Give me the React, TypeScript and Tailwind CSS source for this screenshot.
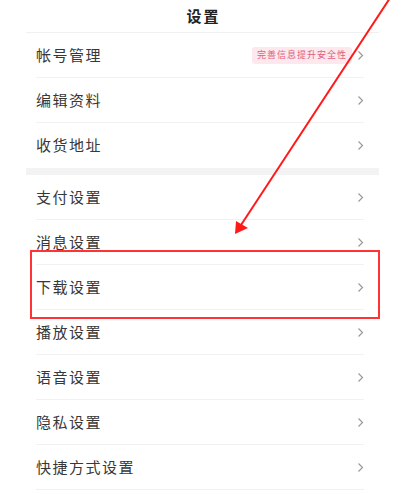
import React from 'react';

const group1 = ['帐号管理', '编辑资料', '收货地址'];
const group2 = ['支付设置', '消息设置', '下载设置', '播放设置', '语音设置', '隐私设置', '快捷方式设置'];

function Chevron() {
  return (
    <svg width="7" height="11" viewBox="0 0 7 11" className="shrink-0">
      <path d="M1.5 1.5l4 4-4 4" fill="none" stroke="#9a9a9a" strokeWidth="1.2" />
    </svg>
  );
}

function Row({ label, last, badge }: { label: string; last?: boolean; badge?: string }) {
  return (
    <div
      className={
        'h-[45px] ml-[10px] mr-[15px] flex items-center justify-between ' +
        (last ? '' : 'border-b border-[#f1f1f1]')
      }
    >
      <span className="text-[15px] tracking-[1.5px] text-[#383838]">{label}</span>
      <div className="flex items-center gap-[5px]">
        {badge && (
          <span className="h-[17px] px-[5px] flex items-center rounded-[3px] bg-[#fde8ee] text-[9px] tracking-[1px] text-[#e0607e]">
            {badge}
          </span>
        )}
        <Chevron />
      </div>
    </div>
  );
}

export default function App() {
  return (
    <div className="relative w-[407px] h-[494px] overflow-hidden bg-white font-['Noto_Sans_CJK_SC',sans-serif]">
      <div className="h-[32px] flex items-center justify-center">
        <span className="text-[15px] font-bold tracking-[2px] text-[#222]">设置</span>
      </div>

      <div className="ml-[26px] mr-[28px] border-t border-[#f0f0f0]">
        {group1.map((l, i) => (
          <Row key={l} label={l} last={i === group1.length - 1} badge={i === 0 ? '完善信息提升安全性' : undefined} />
        ))}
        <div className="h-[7px] bg-[#f3f3f3]" />
        {group2.map((l) => (
          <Row key={l} label={l} />
        ))}
      </div>

      {/* annotation overlay */}
      <svg className="absolute inset-0 pointer-events-none" width="407" height="494">
        <line x1="390" y1="-2" x2="241" y2="225" stroke="#ff1a1a" strokeWidth="2" />
        <polygon points="235,234 236,221 248,228" fill="#ff1a1a" />
        <rect x="31" y="251" width="348" height="67" fill="none" stroke="#ff3333" strokeWidth="2" />
      </svg>
    </div>
  );
}
